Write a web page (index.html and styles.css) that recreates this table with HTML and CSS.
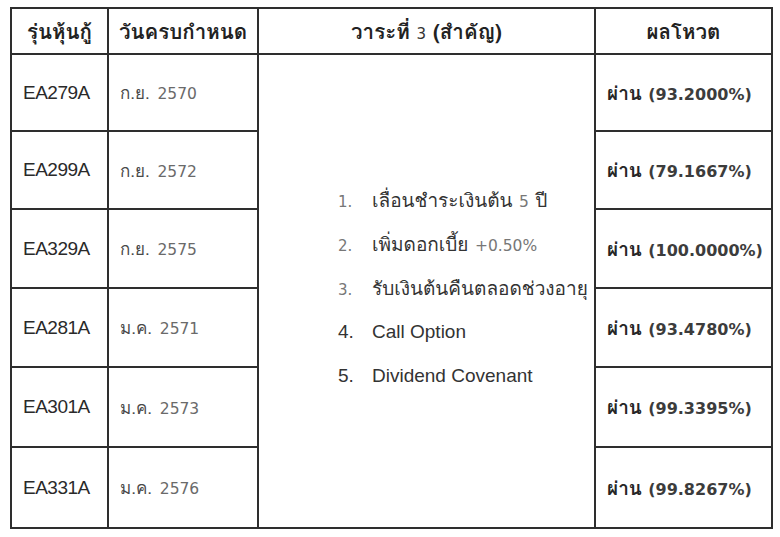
FILE: index.html
```html
<!DOCTYPE html>
<html lang="th">
<head>
<meta charset="utf-8">
<title>ผลโหวต</title>
<link rel="stylesheet" href="styles.css">
</head>
<body>
<table class="vote">
  <colgroup>
    <col class="c-series">
    <col class="c-date">
    <col class="c-agenda">
    <col class="c-result">
  </colgroup>
  <thead>
    <tr class="head">
      <th>รุ่นหุ้นกู้</th>
      <th>วันครบกำหนด</th>
      <th>วาระที่ <span class="num-head">3</span> (สำคัญ)</th>
      <th>ผลโหวต</th>
    </tr>
  </thead>
  <tbody>
    <tr class="row r1">
      <td class="series">EA279A</td>
      <td class="date">ก.ย. <span class="yr">2570</span></td>
      <td class="agenda" rowspan="6">
        <ol class="items">
          <li><span class="n n-light">1.</span><span class="t">เลื่อนชำระเงินต้น <span class="dg">5</span> ปี</span></li>
          <li><span class="n n-light">2.</span><span class="t">เพิ่มดอกเบี้ย <span class="dg">+0.50%</span></span></li>
          <li><span class="n n-light">3.</span><span class="t">รับเงินต้นคืนตลอดช่วงอายุ</span></li>
          <li><span class="n">4.</span><span class="t latin">Call Option</span></li>
          <li><span class="n">5.</span><span class="t latin">Dividend Covenant</span></li>
        </ol>
      </td>
      <td class="result">ผ่าน <span class="pct">(93.2000%)</span></td>
    </tr>
    <tr class="row r2">
      <td class="series">EA299A</td>
      <td class="date">ก.ย. <span class="yr">2572</span></td>
      <td class="result">ผ่าน <span class="pct">(79.1667%)</span></td>
    </tr>
    <tr class="row r3">
      <td class="series">EA329A</td>
      <td class="date">ก.ย. <span class="yr">2575</span></td>
      <td class="result">ผ่าน <span class="pct">(100.0000%)</span></td>
    </tr>
    <tr class="row r4">
      <td class="series">EA281A</td>
      <td class="date">ม.ค. <span class="yr">2571</span></td>
      <td class="result">ผ่าน <span class="pct">(93.4780%)</span></td>
    </tr>
    <tr class="row r5">
      <td class="series">EA301A</td>
      <td class="date">ม.ค. <span class="yr">2573</span></td>
      <td class="result">ผ่าน <span class="pct">(99.3395%)</span></td>
    </tr>
    <tr class="row r6">
      <td class="series">EA331A</td>
      <td class="date">ม.ค. <span class="yr">2576</span></td>
      <td class="result">ผ่าน <span class="pct">(99.8267%)</span></td>
    </tr>
  </tbody>
</table>
</body>
</html>
```

FILE: styles.css
```css
html, body {
  margin: 0;
  padding: 0;
  background: #ffffff;
}

body {
  padding: 7px 0 0 10px;
  font-family: "Loma", "Noto Sans Thai Looped", "Liberation Sans", sans-serif;
  color: #262626;
}

.vote {
  border-collapse: collapse;
  width: 761px;
  table-layout: fixed;
}

.c-series { width: 97px; }
.c-date { width: 150px; }
.c-agenda { width: 337px; }
.c-result { width: 177px; }

.vote th,
.vote td {
  border: 2px solid #2e2e2e;
  padding: 0;
}

.head th {
  height: 44px;
  font-size: 20.5px;
  font-weight: bold;
  text-align: center;
  vertical-align: middle;
  color: #222;
}

.num-head {
  font-family: "DejaVu Sans", sans-serif;
  font-weight: normal;
  font-size: 15px;
  color: #333;
}

.row td {
  vertical-align: middle;
}

.r1 td { height: 75px; }
.r2 td { height: 76px; }
.r3 td { height: 77px; }
.r4 td { height: 77px; }
.r5 td { height: 78px; }
.r6 td { height: 79px; }

.series {
  padding-left: 11px !important;
  font-family: "Liberation Sans", sans-serif;
  font-size: 19px;
  letter-spacing: -0.5px;
  color: #2a2a2a;
}

.date {
  padding-left: 11px !important;
  font-size: 17px;
  color: #4a4a4a;
}

.yr {
  font-family: "DejaVu Sans", sans-serif;
  font-size: 15.5px;
  margin-left: 2px;
  color: #6a6a6a;
}

.result {
  padding-left: 11px !important;
  font-size: 19px;
  font-weight: bold;
  color: #262626;
  white-space: nowrap;
}

.pct {
  font-family: "DejaVu Sans", sans-serif;
  font-size: 16px;
  font-weight: bold;
  color: #3c3c3c;
}

.agenda {
  vertical-align: middle;
  padding-left: 79px !important;
  padding-bottom: 6px !important;
}

.items {
  list-style: none;
  margin: 0;
  padding: 0;
  display: flex;
  flex-direction: column;
  gap: 18px;
}

.items li {
  display: flex;
  align-items: baseline;
  font-size: 19px;
  line-height: 26px;
  height: 26px;
  color: #333;
}

.n {
  width: 34px;
  flex: none;
  font-family: "Liberation Sans", sans-serif;
  color: #333;
}

.n-light {
  font-family: "DejaVu Sans", sans-serif;
  font-size: 15px;
  color: #777;
}

.latin {
  font-family: "Liberation Sans", sans-serif;
}

.dg {
  font-family: "DejaVu Sans", sans-serif;
  font-size: 15.5px;
  color: #777;
}
```
